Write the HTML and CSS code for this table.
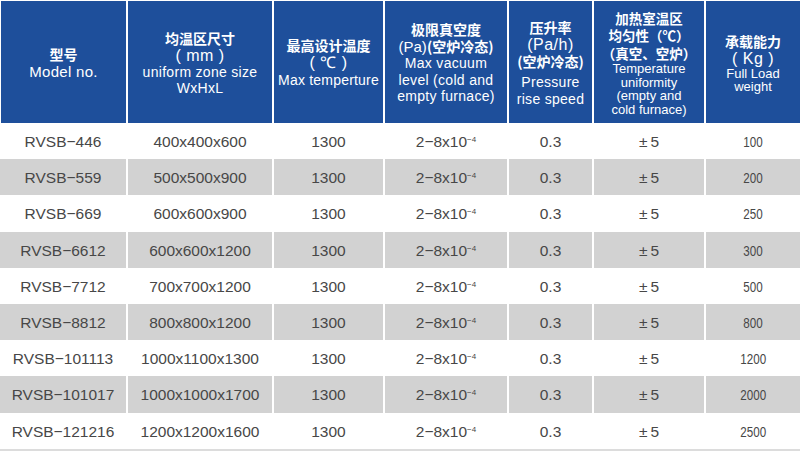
FILE: index.html
```html
<!DOCTYPE html>
<html>
<head>
<meta charset="utf-8">
<link rel="stylesheet" href="styles.css">
</head>
<body>
<div class="table">
  <div class="th"><div class="zh">型号</div><div class="en big">Model no.</div></div>
  <div class="th"><div class="zh">均温区尺寸</div><div class="unit">( mm )</div><div class="en">uniform zone size</div><div class="en">WxHxL</div></div>
  <div class="th"><div class="zh">最高设计温度</div><div class="unit">( ℃ )</div><div class="en tight">Max temperture</div></div>
  <div class="th"><div class="zh">极限真空度</div><div class="zh mix"><span class="rg">(Pa)</span>(空炉冷态)</div><div class="en">Max vacuum</div><div class="en">level (cold and</div><div class="en">empty furnace)</div></div>
  <div class="th"><div class="zh">压升率</div><div class="unit">(Pa/h)</div><div class="zh">(空炉冷态)</div><div class="en gap">Pressure</div><div class="en">rise speed</div></div>
  <div class="th"><div class="zh c6">加热室温区</div><div class="zh c6">均匀性（℃）</div><div class="zh c6">（真空、空炉）</div><div class="en sm">Temperature</div><div class="en sm">uniformity</div><div class="en sm">(empty and</div><div class="en sm">cold furnace)</div></div>
  <div class="th"><div class="zh">承载能力</div><div class="unit">( Kg )</div><div class="en sm">Full Load</div><div class="en sm">weight</div></div>

  <div class="td">RVSB−446</div><div class="td">400x400x600</div><div class="td">1300</div><div class="td">2−8x10<sup>−4</sup></div><div class="td">0.3</div><div class="td">±&thinsp;5</div><div class="td"><span class="nar">100</span></div>
  <div class="td g">RVSB−559</div><div class="td g">500x500x900</div><div class="td g">1300</div><div class="td g">2−8x10<sup>−4</sup></div><div class="td g">0.3</div><div class="td g">±&thinsp;5</div><div class="td g"><span class="nar">200</span></div>
  <div class="td">RVSB−669</div><div class="td">600x600x900</div><div class="td">1300</div><div class="td">2−8x10<sup>−4</sup></div><div class="td">0.3</div><div class="td">±&thinsp;5</div><div class="td"><span class="nar">250</span></div>
  <div class="td g">RVSB−6612</div><div class="td g">600x600x1200</div><div class="td g">1300</div><div class="td g">2−8x10<sup>−4</sup></div><div class="td g">0.3</div><div class="td g">±&thinsp;5</div><div class="td g"><span class="nar">300</span></div>
  <div class="td">RVSB−7712</div><div class="td">700x700x1200</div><div class="td">1300</div><div class="td">2−8x10<sup>−4</sup></div><div class="td">0.3</div><div class="td">±&thinsp;5</div><div class="td"><span class="nar">500</span></div>
  <div class="td g">RVSB−8812</div><div class="td g">800x800x1200</div><div class="td g">1300</div><div class="td g">2−8x10<sup>−4</sup></div><div class="td g">0.3</div><div class="td g">±&thinsp;5</div><div class="td g"><span class="nar">800</span></div>
  <div class="td">RVSB−101113</div><div class="td">1000x1100x1300</div><div class="td">1300</div><div class="td">2−8x10<sup>−4</sup></div><div class="td">0.3</div><div class="td">±&thinsp;5</div><div class="td"><span class="nar">1200</span></div>
  <div class="td g">RVSB−101017</div><div class="td g">1000x1000x1700</div><div class="td g">1300</div><div class="td g">2−8x10<sup>−4</sup></div><div class="td g">0.3</div><div class="td g">±&thinsp;5</div><div class="td g"><span class="nar">2000</span></div>
  <div class="td">RVSB−121216</div><div class="td">1200x1200x1600</div><div class="td">1300</div><div class="td">2−8x10<sup>−4</sup></div><div class="td">0.3</div><div class="td">±&thinsp;5</div><div class="td"><span class="nar">2500</span></div>
</div>
</body>
</html>
```
FILE: styles.css
```css
html, body {
  margin: 0;
  padding: 0;
  background: #ffffff;
  width: 800px;
  height: 452px;
  overflow: hidden;
}

.table {
  margin-top: 1px;
  display: grid;
  grid-template-columns: 126px 144px 109px 122px 83px 110px 94px;
  grid-template-rows: 122px repeat(9, 36.2px);
  column-gap: 2px;
  background: #ffffff;
  border-bottom: 2px solid #dcdcdc;
  font-family: "Liberation Sans", Arial, "Noto Sans CJK SC", sans-serif;
}

.th {
  background: #1e4f9b;
  color: #ffffff;
  display: flex;
  flex-direction: column;
  align-items: center;
  justify-content: center;
  text-align: center;
  white-space: nowrap;
  padding-top: 2px;
  box-sizing: border-box;
}

.th:first-child {
  margin-left: 1px;
}

.zh {
  font-family: "Noto Sans CJK SC", sans-serif;
  font-weight: 700;
  font-size: 14px;
  line-height: 17px;
}

.zh.c6 {
  font-size: 13.5px;
  line-height: 17.5px;
}

.zh.mix .rg {
  font-family: "Liberation Sans", Arial, sans-serif;
  font-weight: 400;
  font-size: 15px;
}

.unit {
  font-family: "Liberation Sans", Arial, sans-serif;
  font-size: 16px;
  line-height: 17px;
  letter-spacing: 0.5px;
}

.en {
  font-size: 14px;
  line-height: 16.5px;
  letter-spacing: 0.3px;
}

.en.big {
  font-size: 15px;
  line-height: 17px;
}

.en.tight {
  letter-spacing: 0.2px;
  margin-top: 1px;
}

.en.gap {
  margin-top: 4px;
}

.en.sm {
  font-size: 13px;
  line-height: 13.5px;
  letter-spacing: 0;
}

.td {
  display: flex;
  align-items: center;
  justify-content: center;
  font-size: 15.5px;
  color: #474747;
  white-space: nowrap;
  padding-top: 2px;
  box-sizing: border-box;
}

.td.g {
  background: #d2d2d2;
}

.td sup {
  font-size: 8px;
  line-height: 0;
  position: relative;
  top: -2px;
  vertical-align: super;
}

.nar {
  display: inline-block;
  transform: scaleX(0.75);
  font-size: 15.5px;
}
```
